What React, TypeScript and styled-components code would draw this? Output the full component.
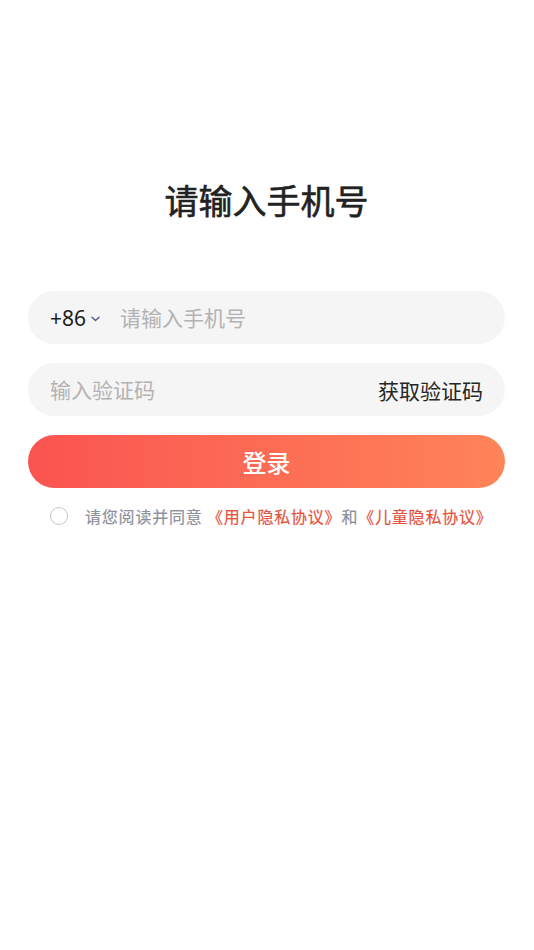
import styled, { createGlobalStyle } from 'styled-components'

const GlobalStyle = createGlobalStyle`
	html, body {
		margin: 0;
		padding: 0;
		background: #ffffff;
	}
	body {
		font-family: 'Noto Sans', 'Noto Sans CJK SC', sans-serif;
	}
	* {
		box-sizing: border-box;
	}
`

export default function App() {
	return (
		<>
			<GlobalStyle />
			<Page>
				<Title>请输入手机号</Title>
				<Form>
					<Field>
						<CountryCode>
							+86
							<svg width="9" height="6" viewBox="0 0 9 6" fill="none">
								<path d="M1 1.2l3.5 3.3L8 1.2" stroke="#4f5f80" strokeWidth="1.4" strokeLinecap="round" strokeLinejoin="round" />
							</svg>
						</CountryCode>
						<Input placeholder="请输入手机号" />
					</Field>
					<Field>
						<Input placeholder="输入验证码" />
						<CodeButton>获取验证码</CodeButton>
					</Field>
					<LoginButton>登录</LoginButton>
				</Form>
				<Agreement>
					<Radio />
					<AgreementText>
						请您阅读并同意 <Link>《用户隐私协议》</Link>和<Link>《儿童隐私协议》</Link>
					</AgreementText>
				</Agreement>
			</Page>
		</>
	)
}

const Page = styled.div`
	width: 534px;
	height: 950px;
	padding: 176px 29px 0 28px;
	display: flex;
	flex-direction: column;
`

const Title = styled.h1`
	margin: 0;
	text-align: center;
	font-size: 34px;
	line-height: 48px;
	font-weight: 400;
	color: #222222;
	-webkit-text-stroke: 0.6px #222222;
	font-family: 'Noto Sans CJK SC', sans-serif;
`

const Form = styled.div`
	display: flex;
	flex-direction: column;
	gap: 19px;
	margin-top: 67px;
`

const Field = styled.div`
	height: 53px;
	border-radius: 27px;
	background: #f5f5f5;
	display: flex;
	align-items: center;
	padding: 0 22px 0 22px;
	gap: 20px;
`

const CountryCode = styled.div`
	display: flex;
	align-items: center;
	gap: 5px;
	font-family: 'Noto Sans', sans-serif;
	font-size: 21px;
	color: #1e1e1e;
	padding-top: 1px;

	svg {
		margin-top: 1px;
	}
`

const Input = styled.input`
	flex: 1;
	min-width: 0;
	border: none;
	outline: none;
	background: transparent;
	font-family: 'Noto Sans CJK SC', sans-serif;
	font-size: 21px;
	color: #222222;
	padding: 0 0 2px;

	&::placeholder {
		color: #b3b3b3;
	}
`

const CodeButton = styled.span`
	font-family: 'Noto Sans CJK SC', sans-serif;
	font-size: 21px;
	color: #262626;
	white-space: nowrap;
`

const LoginButton = styled.button`
	height: 53px;
	border: none;
	border-radius: 27px;
	background: linear-gradient(90deg, #fa5450 0%, #ff8459 100%);
	color: #ffffff;
	font-family: 'Noto Sans CJK SC', sans-serif;
	font-size: 24px;
	font-weight: 500;
	cursor: pointer;
`

const Agreement = styled.div`
	display: flex;
	align-items: center;
	gap: 17px;
	margin-top: 17px;
	padding-left: 22px;
`

const Radio = styled.span`
	width: 18px;
	height: 18px;
	border-radius: 50%;
	border: 1px solid #c8c8c8;
	flex-shrink: 0;
`

const AgreementText = styled.p`
	margin: 0;
	font-family: 'Noto Sans CJK SC', sans-serif;
	font-size: 16px;
	line-height: 22px;
	letter-spacing: 0.8px;
	color: #8c919c;
	-webkit-text-stroke: 0.2px currentColor;
	white-space: nowrap;
`

const Link = styled.span`
	color: #e5533e;
`
